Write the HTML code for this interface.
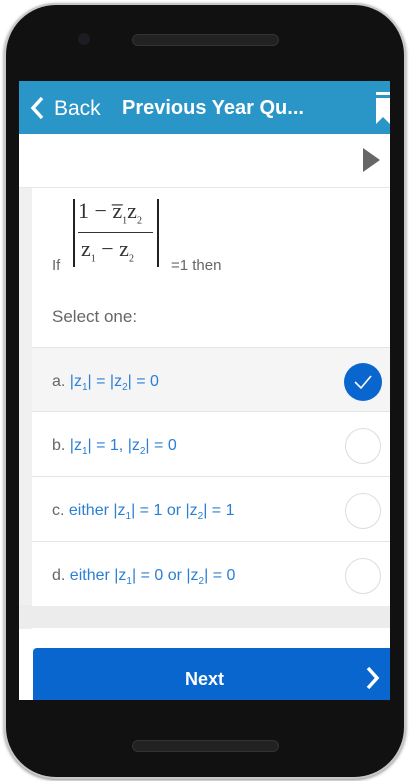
<!DOCTYPE html>
<html><head><style>
body{margin:0;width:411px;height:781px;background:#fff;position:relative;overflow:hidden;font-family:"Liberation Sans",sans-serif}
.phone{position:absolute;left:4px;top:3px;width:398px;height:772px;background:#111;border-radius:52px;border:2px solid #c8c8c8;box-shadow:0 1px 3px #888}
.scr{position:absolute;left:19px;top:81px;width:371px;height:619px;background:#fff;overflow:hidden}
.hdr{position:absolute;left:0;top:0;width:371px;height:53px;background:#2a96c8;color:#fff}
.opt{position:absolute;left:13px;width:358px;height:64px;border-top:1px solid #e4e4e4;font-size:16px;color:#666}
.opt span{position:absolute;left:20px;top:25px}
.opt b{font-weight:normal;color:#2a7fd4}
.c{position:absolute;left:313px;top:14px;width:36px;height:36px;border-radius:50%;border:1px solid #ddd;box-sizing:border-box;background:#fff}
sub{font-size:10px}
</style></head><body>
<div class="phone"></div>
<div style="position:absolute;left:78px;top:33px;width:12px;height:12px;border-radius:50%;background:#1c1c22"></div>
<div style="position:absolute;left:132px;top:34px;width:145px;height:10px;border-radius:6px;background:#222;border:1px solid #333"></div>
<div style="position:absolute;left:132px;top:740px;width:145px;height:10px;border-radius:6px;background:#222;border:1px solid #333"></div>
<div class="scr">
<div class="hdr">
<svg style="position:absolute;left:10px;top:15px" width="16" height="24"><path d="M13 2 L4 12 L13 22" stroke="#fff" stroke-width="3.5" fill="none"/></svg>
<div style="position:absolute;left:35px;top:16px;font-size:21px">Back</div>
<div style="position:absolute;left:103px;top:16px;font-size:20px;font-weight:bold">Previous Year Qu...</div>
<svg style="position:absolute;left:357px;top:11px" width="14" height="32"><path d="M0 0H14V3H0ZM0 6H14V32L7 25L0 32Z" fill="#fff"/></svg>
</div>
<svg style="position:absolute;left:344px;top:67px" width="18" height="24"><path d="M0 0L17 12L0 24Z" fill="#666"/></svg>
<div style="position:absolute;left:0;top:106px;width:371px;height:1px;background:#e6e6e6"></div>
<div style="position:absolute;left:0;top:107px;width:13px;height:440px;background:#f0f0f0"></div>
<div style="position:absolute;left:371px;top:107px;width:1px;height:440px;background:#eee"></div>
<div style="position:absolute;left:33px;top:176px;font-size:15px;color:#666">If</div>
<div style="position:absolute;left:54px;top:118px;width:2px;height:68px;background:#222"></div>
<div style="position:absolute;left:138px;top:118px;width:2px;height:68px;background:#222"></div>
<div style="position:absolute;left:59px;top:117px;font-family:'Liberation Serif',serif;font-size:22px;color:#333">1 − z̅<sub>1</sub>z<sub>2</sub></div>
<div style="position:absolute;left:59px;top:151px;width:75px;height:1px;background:#333"></div>
<div style="position:absolute;left:62px;top:155px;font-family:'Liberation Serif',serif;font-size:22px;color:#333">z<sub>1</sub> − z<sub>2</sub></div>
<div style="position:absolute;left:152px;top:176px;font-size:15px;color:#666">=1 then</div>
<div style="position:absolute;left:33px;top:226px;font-size:17px;color:#666">Select one:</div>
<div class="opt" style="top:266px;background:#f5f5f5"><span>a. <b>|z<sub>1</sub>| = |z<sub>2</sub>| = 0</b></span><div class="c" style="background:#0a66cf;border:none;width:38px;height:38px;top:15px;left:312px"><svg width="38" height="38"><path d="M11 19L17 25L27 13" stroke="#fff" stroke-width="1.6" fill="none"/></svg></div></div>
<div class="opt" style="top:330px"><span>b. <b>|z<sub>1</sub>| = 1, |z<sub>2</sub>| = 0</b></span><div class="c" style="top:16px"></div></div>
<div class="opt" style="top:395px"><span>c. <b>either |z<sub>1</sub>| = 1 or |z<sub>2</sub>| = 1</b></span><div class="c" style="top:16px"></div></div>
<div class="opt" style="top:460px;border-bottom:1px solid #ddd"><span>d. <b>either |z<sub>1</sub>| = 0 or |z<sub>2</sub>| = 0</b></span><div class="c" style="top:16px"></div></div>
<div style="position:absolute;left:0;top:525px;width:371px;height:22px;background:#ececec"></div>
<div style="position:absolute;left:0;top:524px;width:13px;height:24px;background:#ececec"></div>
<div style="position:absolute;left:14px;top:567px;width:357px;height:52px;background:#0a66cf;border-radius:4px 0 0 0;color:#fff">
<div style="position:absolute;left:0;width:343px;text-align:center;top:21px;font-size:18px;font-weight:bold">Next</div>
<svg style="position:absolute;left:332px;top:18px" width="16" height="24"><path d="M3 2L12 12L3 22" stroke="#fff" stroke-width="3.5" fill="none"/></svg>
</div>
</div>
</body></html>
